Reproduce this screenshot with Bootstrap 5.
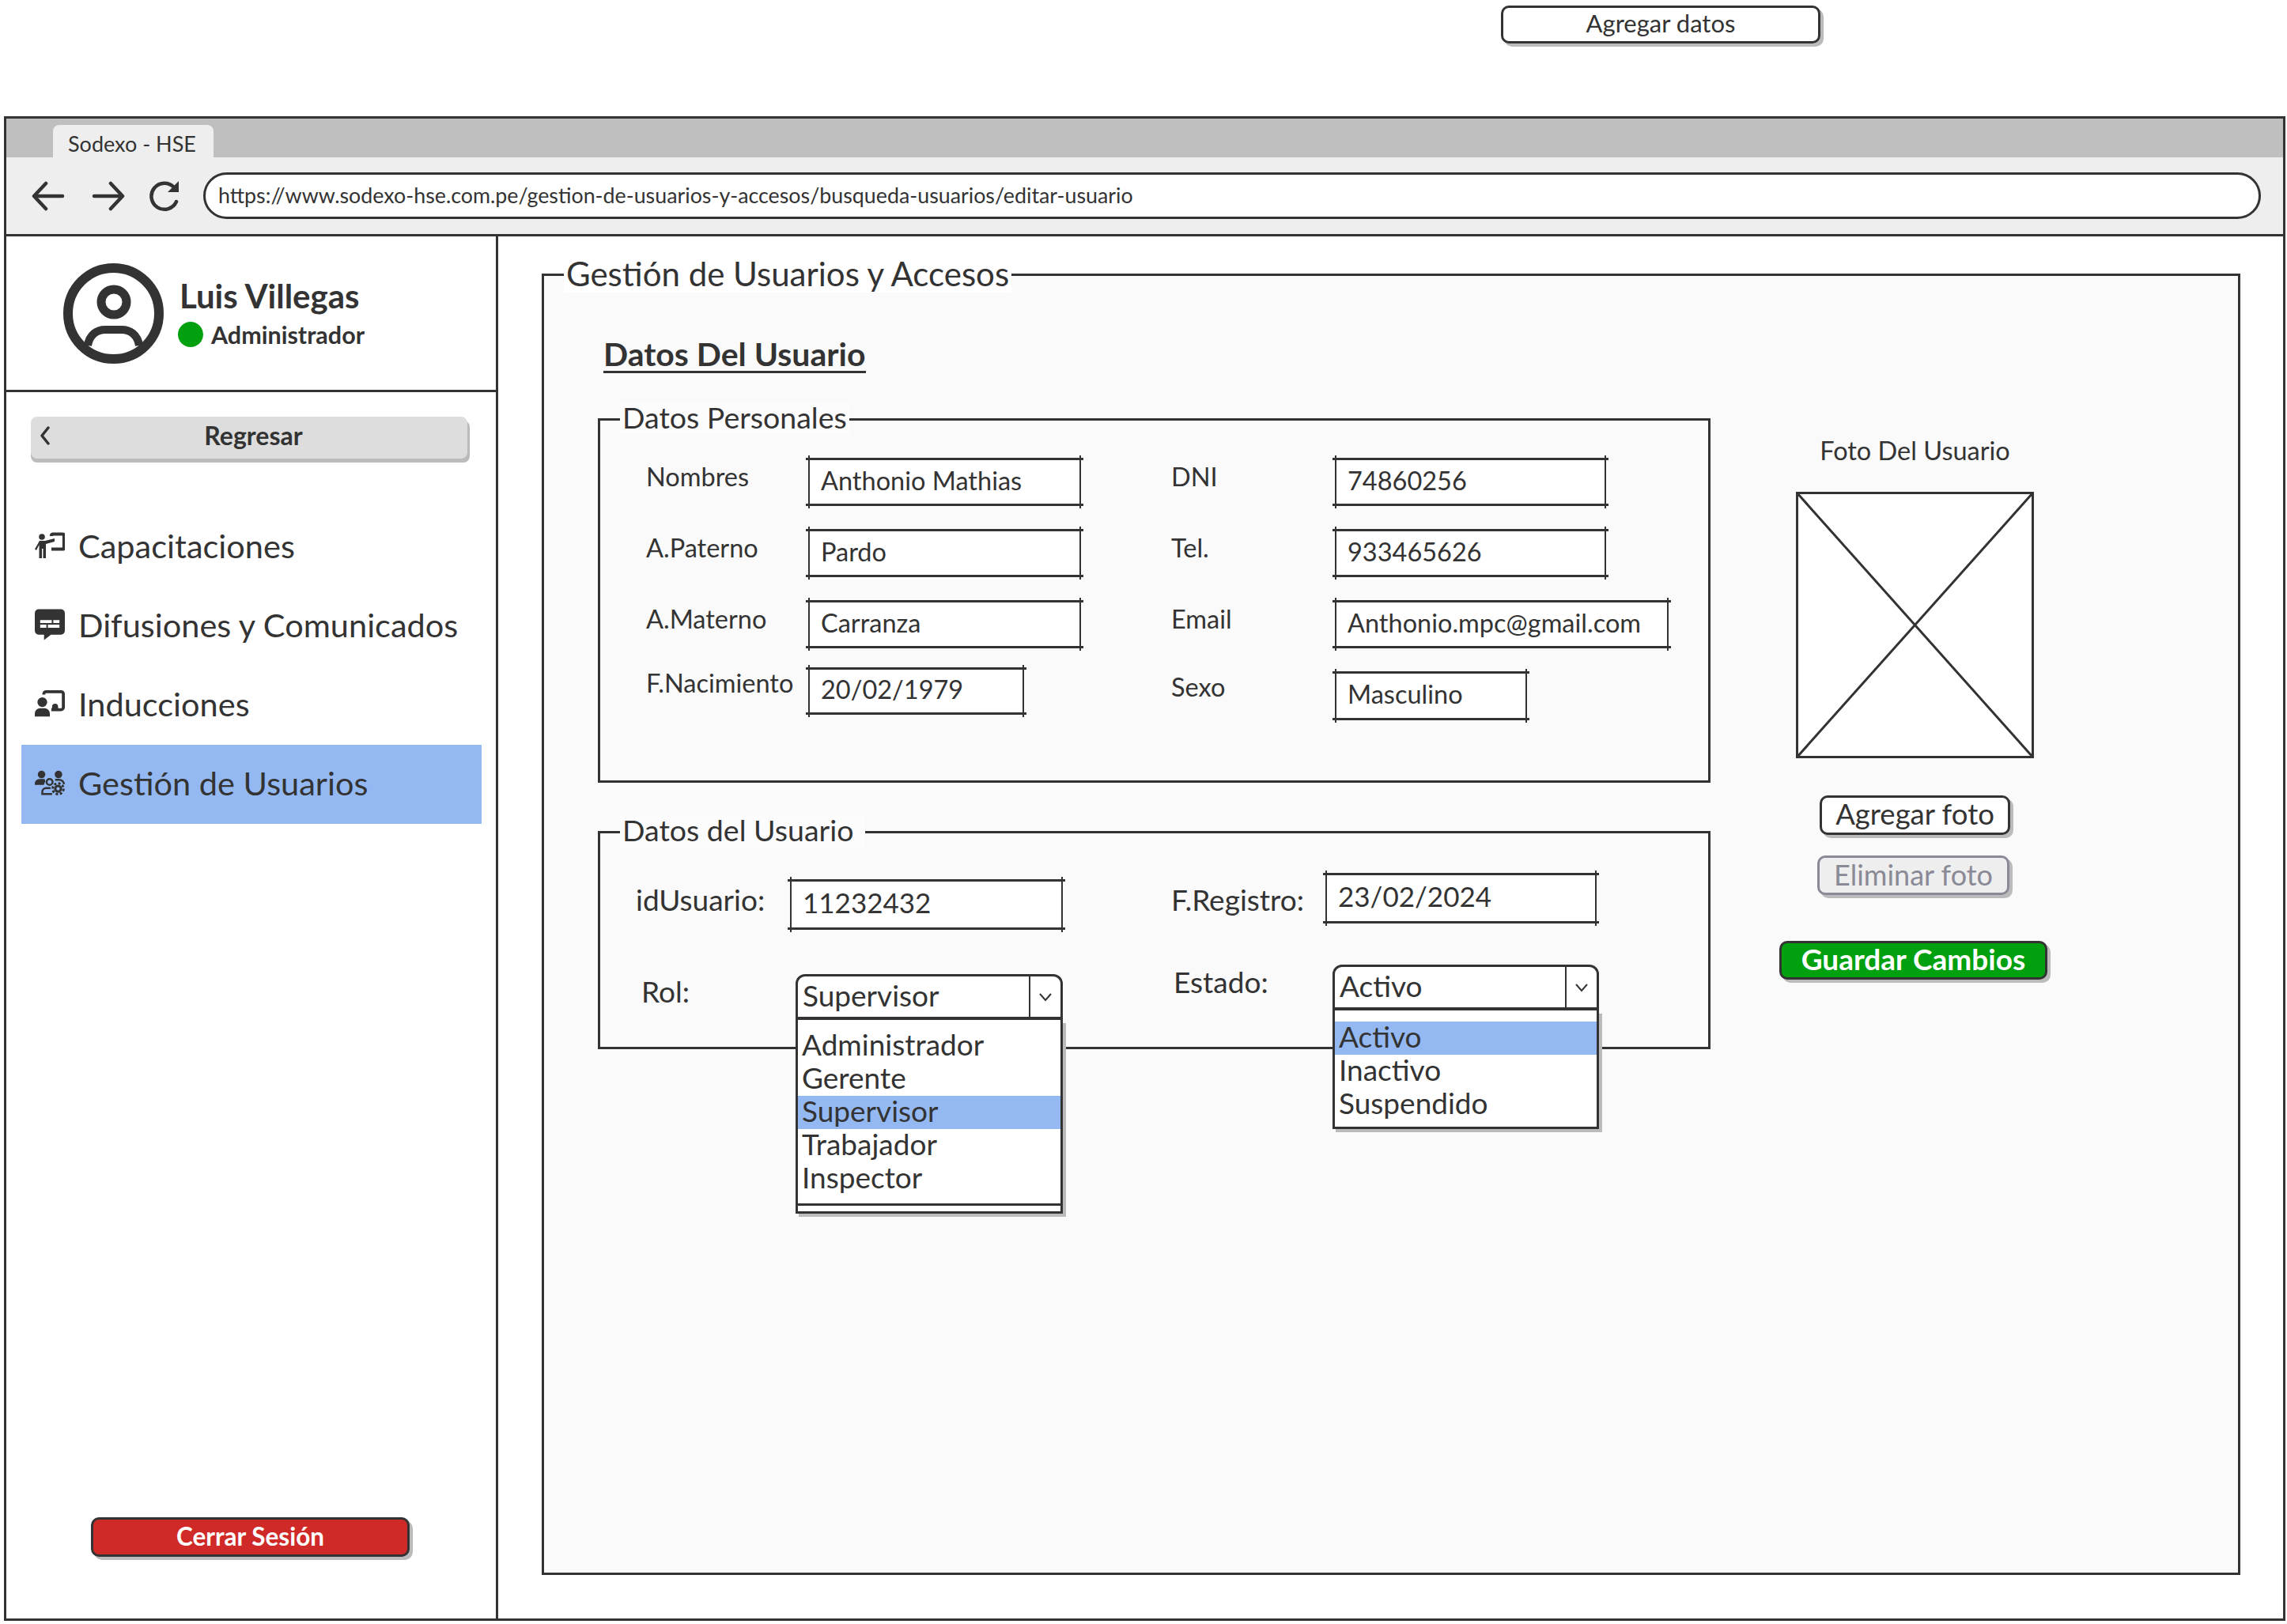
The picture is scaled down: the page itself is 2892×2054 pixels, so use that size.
<!DOCTYPE html>
<html lang="es">
<head>
<meta charset="UTF-8">
<title>Sodexo - HSE</title>
<link href="https://cdn.jsdelivr.net/npm/bootstrap@5.3.0/dist/css/bootstrap.min.css" rel="stylesheet">
<style>
  body { background: #fff; color: #333; font-family: Lato, "Open Sans", sans-serif; margin: 0; width: 2892px; height: 2054px; overflow: hidden; }

  /* top strip */
  .top-strip { height: 147px; padding: 7px 0 0 1898px; }
  .sk-btn { display: flex; align-items: center; justify-content: center; border: 3px solid #333; border-radius: 10px; box-shadow: 4px 4px 0 #bbb; background: #fff; color: #333; padding: 0 0 3px; }
  .btn-datos { width: 404px; height: 48px; font-size: 31px; }

  /* browser frame */
  .browser { width: 2885px; height: 1903px; margin-left: 5px; border: 3px solid #333; }
  .tab-strip { height: 49px; background: #bfbfbf; padding: 8px 0 0 59px; }
  .tab-page { width: 203px; height: 41px; padding-left: 19px; background: #eee; border-radius: 8px 8px 0 0; font-size: 27px; line-height: 48px; }
  .tool-strip { height: 100px; background: #eee; border-bottom: 3px solid #333; padding: 19px 28px 0 32px; }
  .nav-ico { flex: none; margin-top: 10px; }
  .ico-next { margin-left: 34px; }
  .ico-load { margin-left: 30px; }
  .url-box { height: 59px; flex: 1; margin-left: 29px; background: #fff; border: 3px solid #333; border-radius: 30px; padding-left: 16px; font-size: 26.800px; line-height: 52px; }

  /* sidebar */
  .app-body { height: 1748px; }
  .side-panel { width: 622px; flex: none; border-right: 3px solid #333; }
  .user-head { height: 197px; border-bottom: 3px solid #333; padding-left: 72px; }
  .user-info { margin-left: 20px; }
  .user-name { font-size: 42px; font-weight: 700; line-height: 46px; }
  .user-role { font-size: 30.500px; font-weight: 700; line-height: 36px; margin-top: 8px; margin-left: -2px; }
  .dot-on { width: 32px; height: 32px; border-radius: 50%; background: #00a00e; margin-right: 10px; }
  .back-btn { width: 552px; height: 53px; margin: 31px 0 60px 31px; padding: 0 0 10px 11px; background: #ddd; border: 0; border-radius: 8px; box-shadow: 0 5px 0 #bbb, 3px 5px 0 #bbb; font-size: 32px; font-weight: 700; color: #333; position: relative; }
  .back-btn svg { position: absolute; left: 11px; top: 12px; }
  .side-link { height: 100px; margin-left: 19px; width: 582px; padding-left: 17px; font-size: 41.500px; color: #333; text-decoration: none; }
  .side-link svg { flex: none; margin-right: 17px; }
  .side-link.is-on { background: #94b9f2; margin-top: 2px; padding-bottom: 4px; }
  .btn-logout { width: 403px; height: 50px; margin: auto 0 78px 107px; padding: 0; background: #cf2a27; color: #fff; font-size: 31.500px; font-weight: 700; }

  /* main content */
  .main-pane { flex: 1; padding: 25px 0 0 55px; min-width: 0; }
  .sk-set { border: 3px solid #333; }
  .sk-set > legend { float: none; width: auto; margin: 0; padding: 0 3px; color: #333; }
  .set-main { width: 2148px; height: 1668px; background: #fafafa; padding-left: 68px; }
  .set-main > legend { margin-left: -43px; background: #fff; font-size: 42px; line-height: 44px; padding-bottom: 2px; }
  .data-title { display: inline-block; height: 43px; margin: 59px 0 0 7px; border-bottom: 3px solid #333; font-size: 41px; font-weight: 700; line-height: 38px; }
  .set-data { width: 1407px; }
  .set-data > legend { background: #fcfcfc; font-size: 37.500px; line-height: 36px; padding-bottom: 4px; }
  .set-personal { height: 480px; margin-top: 38px; padding: 29px 0 0 58px; }
  .set-personal > legend { margin-left: -33px; }
  .set-user { height: 295px; margin-top: 42px; padding: 32px 0 0 45px; }
  .set-user > legend { margin-left: -20px; padding-right: 14px; }
  .form-col { width: 664px; flex: none; }
  .form-col-user { width: 677px; flex: none; }
  .field-row { display: flex; }
  .lbl { flex: none; font-size: 32.500px; line-height: 32px; }
  .lbl-a { width: 205px; }
  .lbl-b { width: 207px; }
  .sk-field { position: relative; flex: none; height: 61px; background: #fff; border: solid #333; border-width: 3px 2px; padding-left: 14px; font-size: 32.500px; line-height: 52px; }
  .sk-field::before, .sk-field::after { content: ""; position: absolute; pointer-events: none; }
  .sk-field::before { inset: -6px -2px; border: solid #333; border-width: 0 2px; }
  .sk-field::after { inset: -3px -5px; border: solid #333; border-width: 3px 0; }
  .w-name { width: 345px; }
  .w-date { width: 273px; height: 60px; line-height: 49px; }
  .w-data { width: 343px; }
  .w-mail { width: 422px; }
  .w-sex { width: 243px; height: 62px; }
  .gap-row { margin-top: 29px; }
  .user-lbl { font-size: 37px; line-height: 36px; width: 195px; }
  .lg-field { width: 345px; height: 64px; font-size: 35px; line-height: 52px; }
  .lg-field.w-data { width: 343px; }
  .row-rol { margin-top: 56px; margin-left: 7px; }
  .row-estado { margin-top: 52px; margin-left: 3px; }
  .lbl-estado { width: 201px; }

  /* combos */
  .sk-combo { flex: none; position: relative; font-size: 37px; }
  .combo-rol { width: 338px; }
  .combo-estado { width: 337px; }
  .combo-head { height: 58px; background: #fff; border: 3px solid #333; border-bottom-width: 4px; border-radius: 12px 12px 0 0; line-height: 48px; padding-left: 6px; }
  .combo-arrow { width: 40px; border-left: 2px solid #333; }
  .combo-list { background: #fff; border: solid #333; border-width: 0 3px 3px; box-shadow: 4px 4px 0 #bbb; }
  .combo-rol .combo-list { padding-top: 12px; }
  .combo-estado .combo-list { padding: 14px 0 7px; }
  .combo-item { height: 42px; line-height: 38px; padding-left: 5px; }
  .combo-item.is-on { background: #94b9f2; }
  .combo-foot { height: 10px; margin-top: 10px; border-top: 3px solid #333; }

  /* photo */
  .photo-col { width: 347px; flex: none; margin-left: 85px; padding-top: 80px; }
  .photo-cap { font-size: 32.500px; line-height: 36px; margin-bottom: 34px; }
  .btn-foto { width: 241px; height: 50px; margin-top: 47px; font-size: 36.500px; }
  .btn-off { width: 243px; height: 50px; margin: 26px 4px 0 0; background: #eee; border-color: #8a8a96; color: #8a8a96; font-size: 36px; }
  .btn-save { width: 339px; height: 49px; margin: 58px 0 0 2px; background: #00a00e; color: #fff; font-size: 37px; font-weight: 700; }
</style>
</head>
<body>

<div class="top-strip">
  <button class="sk-btn btn-datos">Agregar datos</button>
</div>

<div class="browser">
  <div class="tab-strip">
    <div class="tab-page">Sodexo - HSE</div>
  </div>
  <div class="tool-strip d-flex">
    <svg class="nav-ico" width="42" height="40" viewBox="0 0 42 40" fill="none" stroke="#333" stroke-width="4.500" stroke-linecap="round" stroke-linejoin="round"><path d="M39 20H4M18 4 3 20l15 16"/></svg>
    <svg class="nav-ico ico-next" width="42" height="40" viewBox="0 0 42 40" fill="none" stroke="#333" stroke-width="4.500" stroke-linecap="round" stroke-linejoin="round"><path d="M3 20h35M24 4l15 16-15 16"/></svg>
    <svg class="nav-ico ico-load" width="40" height="40" viewBox="0 0 40 40" fill="none" stroke="#333" stroke-width="4.500" stroke-linecap="round"><path d="M32 9A16.500 16.500 0 1 0 35 27"/><path d="M38 1v14H24z" fill="#333" stroke="none"/></svg>
    <div class="url-box">https://www.sodexo-hse.com.pe/gestion-de-usuarios-y-accesos/busqueda-usuarios/editar-usuario</div>
  </div>

  <div class="app-body d-flex">
    <aside class="side-panel d-flex flex-column">
      <div class="user-head d-flex align-items-center">
        <svg width="127" height="127" viewBox="0 0 127 127" fill="none" stroke="#333"><circle cx="63.500" cy="63.500" r="57.500" stroke-width="12"/><circle cx="64" cy="49" r="16" stroke-width="11"/><path d="M31 104c2-14 12-20 22-20h21c10 0 20 6 22 20" stroke-width="10"/></svg>
        <div class="user-info">
          <div class="user-name">Luis Villegas</div>
          <div class="user-role d-flex align-items-center"><span class="dot-on"></span>Administrador</div>
        </div>
      </div>

      <button class="back-btn">
        <svg width="14" height="24" viewBox="0 0 14 24" fill="none" stroke="#333" stroke-width="3.500" stroke-linecap="round" stroke-linejoin="round"><path d="M11 2 3 12l8 10"/></svg>
        Regresar
      </button>

      <a class="side-link d-flex align-items-center" href="#">
        <svg width="38" height="38" viewBox="0 0 38 38" fill="#333"><circle cx="9" cy="8" r="3.800"/><path d="M6 13h7l12-3v4l-11 3v18h-3.500V23H9v12H5.500V18L2 25 0 23.500z"/><path d="M21 7V6.500a2 2 0 0 1 2-2h12a2 2 0 0 1 2 2v15a2 2 0 0 1-2 2H21" fill="none" stroke="#333" stroke-width="4.200"/></svg>
        Capacitaciones
      </a>
      <a class="side-link d-flex align-items-center" href="#">
        <svg width="38" height="40" viewBox="0 0 39 40" fill="#333"><path d="M5 0h29a5 5 0 0 1 5 5v23a5 5 0 0 1-5 5H21l-9 7v-7H5a5 5 0 0 1-5-5V5a5 5 0 0 1 5-5z"/><path d="M7 14h15v4H7zM24 14h8v4h-8zM7 20h8v4H7zM17 20h15v4H17z" fill="#fff"/></svg>
        Difusiones y Comunicados
      </a>
      <a class="side-link d-flex align-items-center" href="#">
        <svg width="38" height="36" viewBox="0 0 40 36" fill="#333"><path d="M12 6V5a3 3 0 0 1 3-3h20a3 3 0 0 1 3 3v18a3 3 0 0 1-3 3H22" fill="none" stroke="#333" stroke-width="4"/><circle cx="10" cy="16" r="6.500"/><path d="M0 35v-4a7 7 0 0 1 7-7h6a7 7 0 0 1 7 7v4z"/><path d="M23 22a4 4 0 0 1 8 0v3h-8z"/></svg>
        Inducciones
      </a>
      <a class="side-link is-on d-flex align-items-center" href="#">
        <svg width="38" height="36" viewBox="0 0 40 36" fill="#333"><circle cx="9" cy="7" r="5"/><circle cx="31.500" cy="7" r="5"/><path d="M0 21v-2a6 6 0 0 1 6-6h7l1 3-2 5z"/><circle cx="19.700" cy="17" r="4" fill="none" stroke="#333" stroke-width="2.600"/><path d="M27 14h5a7 7 0 0 1 7 6M21 25h-6a5 5 0 0 0-5 5v3h13" fill="none" stroke="#333" stroke-width="2.600"/><circle cx="31" cy="26" r="3.800" fill="none" stroke="#333" stroke-width="3.200"/><circle cx="31" cy="26" r="7.200" fill="none" stroke="#333" stroke-width="3.200" stroke-dasharray="3.200 2.450"/></svg>
        Gestión de Usuarios
      </a>

      <button class="sk-btn btn-logout">Cerrar Sesión</button>
    </aside>

    <main class="main-pane">
      <fieldset class="sk-set set-main">
        <legend>Gestión de Usuarios y Accesos</legend>
        <div class="data-title">Datos Del Usuario</div>

        <div class="d-flex">
          <div>
            <fieldset class="sk-set set-data set-personal">
              <legend>Datos Personales</legend>
              <div class="d-flex">
                <div class="form-col">
                  <div class="field-row"><div class="lbl lbl-a mt-2">Nombres</div><div class="sk-field w-name">Anthonio Mathias</div></div>
                  <div class="field-row gap-row"><div class="lbl lbl-a mt-2">A.Paterno</div><div class="sk-field w-name">Pardo</div></div>
                  <div class="field-row gap-row"><div class="lbl lbl-a mt-2">A.Materno</div><div class="sk-field w-name">Carranza</div></div>
                  <div class="field-row mt-4"><div class="lbl lbl-a mt-1">F.Nacimiento</div><div class="sk-field w-date">20/02/1979</div></div>
                </div>
                <div>
                  <div class="field-row"><div class="lbl lbl-b mt-2">DNI</div><div class="sk-field w-data">74860256</div></div>
                  <div class="field-row gap-row"><div class="lbl lbl-b mt-2">Tel.</div><div class="sk-field w-data">933465626</div></div>
                  <div class="field-row gap-row"><div class="lbl lbl-b mt-2">Email</div><div class="sk-field w-mail">Anthonio.mpc@gmail.com</div></div>
                  <div class="field-row gap-row"><div class="lbl lbl-b mt-1">Sexo</div><div class="sk-field w-sex">Masculino</div></div>
                </div>
              </div>
            </fieldset>

            <fieldset class="sk-set set-data set-user">
              <legend>Datos del Usuario</legend>
              <div class="d-flex">
                <div class="form-col-user">
                  <div class="field-row mt-2"><div class="lbl user-lbl mt-2">idUsuario:</div><div class="sk-field lg-field">11232432</div></div>
                  <div class="field-row row-rol"><div class="lbl user-lbl mt-1">Rol:</div>
                    <div class="sk-combo combo-rol">
                      <div class="combo-head d-flex justify-content-between">Supervisor<span class="combo-arrow d-flex align-items-center justify-content-center"><svg width="20" height="12" viewBox="0 0 20 12" fill="none" stroke="#333" stroke-width="2"><path d="M3 2l7 8 7-8"/></svg></span></div>
                      <div class="combo-list">
                        <div class="combo-item">Administrador</div>
                        <div class="combo-item">Gerente</div>
                        <div class="combo-item is-on">Supervisor</div>
                        <div class="combo-item">Trabajador</div>
                        <div class="combo-item">Inspector</div>
                        <div class="combo-foot"></div>
                      </div>
                    </div>
                  </div>
                </div>
                <div>
                  <div class="field-row"><div class="lbl user-lbl mt-3">F.Registro:</div><div class="sk-field lg-field w-data">23/02/2024</div></div>
                  <div class="field-row row-estado"><div class="lbl user-lbl lbl-estado mt-1">Estado:</div>
                    <div class="sk-combo combo-estado">
                      <div class="combo-head d-flex justify-content-between">Activo<span class="combo-arrow d-flex align-items-center justify-content-center"><svg width="20" height="12" viewBox="0 0 20 12" fill="none" stroke="#333" stroke-width="2"><path d="M3 2l7 8 7-8"/></svg></span></div>
                      <div class="combo-list">
                        <div class="combo-item is-on">Activo</div>
                        <div class="combo-item">Inactivo</div>
                        <div class="combo-item">Suspendido</div>
                      </div>
                    </div>
                  </div>
                </div>
              </div>
            </fieldset>
          </div>

          <div class="photo-col d-flex flex-column align-items-center">
            <div class="photo-cap">Foto Del Usuario</div>
            <svg width="301" height="337" viewBox="0 0 301 337"><rect x="1.500" y="1.500" width="298" height="334" fill="#fff" stroke="#333" stroke-width="3"/><path d="M1.500 1.500 299.500 335.500M299.500 1.500 1.500 335.500" stroke="#333" stroke-width="3"/></svg>
            <button class="sk-btn btn-foto">Agregar foto</button>
            <button class="sk-btn btn-off">Eliminar foto</button>
            <button class="sk-btn btn-save align-self-start">Guardar Cambios</button>
          </div>
        </div>
      </fieldset>
    </main>
  </div>
</div>

</body>
</html>
